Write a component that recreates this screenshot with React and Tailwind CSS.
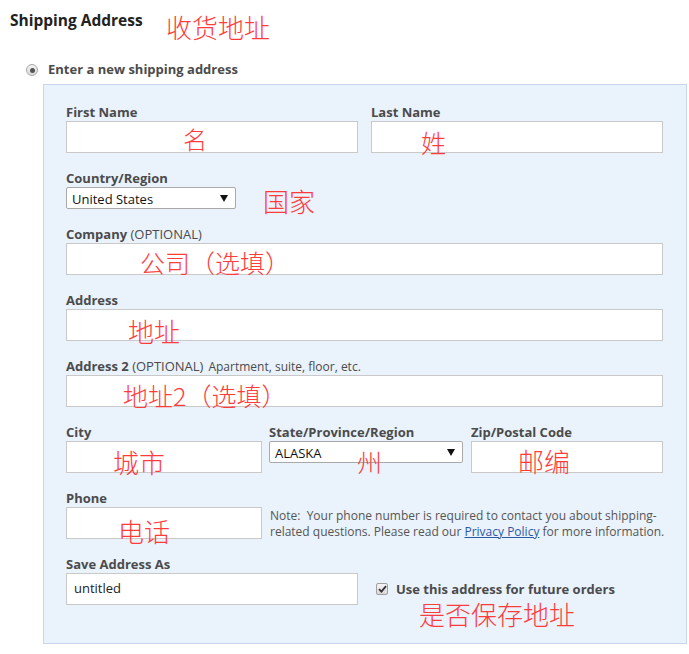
import React from "react";

const font = { fontFamily: '"Open Sans", "Noto Sans", sans-serif' };

function Label({ children }) {
  return (
    <div className="h-[18px] leading-[18px] text-[13px] font-bold text-[#4b4b4b] whitespace-nowrap">
      {children}
    </div>
  );
}

function Input({ className = "", value = "" }) {
  return (
    <div
      className={`h-[32px] bg-white border border-[#c9c9c9] flex items-center px-[7px] text-[13px] text-[#222] ${className}`}
    >
      {value}
    </div>
  );
}

function Select({ className = "", value }) {
  return (
    <div
      className={`h-[22px] bg-white border border-[#a9a9a9] rounded-[2px] flex items-center justify-between pl-[5px] pr-[7px] text-[13px] text-[#111] ${className}`}
    >
      <span className="leading-[20px] pt-[1px]">{value}</span>
      <svg width="8" height="7" viewBox="0 0 8 7">
        <path d="M0 0 H8 L4 7 Z" fill="#111" />
      </svg>
    </div>
  );
}

function Note({ text, className }) {
  return (
    <div
      className={`absolute text-[#ff3b3b] leading-none whitespace-nowrap pointer-events-none ${className}`}
      style={{ fontFamily: '"Noto Sans CJK SC", sans-serif', fontWeight: 300 }}
    >
      {text}
    </div>
  );
}

export default function App() {
  return (
    <div className="relative w-[689px] h-[654px] bg-white overflow-hidden" style={font}>
      <div className="px-[10px] pt-[10px]">
        <div className="h-[20px] leading-[20px] text-[15.5px] font-bold text-[#222]">
          Shipping Address
        </div>
        <div className="mt-[31px] ml-[16px] flex items-center h-[18px]">
          <span className="w-[12px] h-[12px] rounded-full border border-[#a8a8a8] bg-gradient-to-b from-[#f2f2f2] to-[#dcdcdc] flex items-center justify-center">
            <span className="w-[5px] h-[5px] rounded-full bg-[#555]" />
          </span>
          <span className="ml-[10px] text-[13px] font-bold text-[#4b4b4b]">
            Enter a new shipping address
          </span>
        </div>
        <div className="mt-[5px] ml-[33px] w-[644px] border border-[#c7d6e8] bg-[#eaf2fc] pl-[22px] pr-[23px] pt-[18px] pb-[38px]">
          <div className="flex gap-[13px]">
            <div className="w-[292px]">
              <Label>First Name</Label>
              <Input />
            </div>
            <div className="w-[292px]">
              <Label>Last Name</Label>
              <Input />
            </div>
          </div>

          <div className="mt-[16px]">
            <Label>Country/Region</Label>
            <Select className="w-[170px]" value="United States" />
          </div>

          <div className="mt-[16px]">
            <Label>
              Company <span className="font-normal">(OPTIONAL)</span>
            </Label>
            <Input />
          </div>

          <div className="mt-[16px]">
            <Label>Address</Label>
            <Input />
          </div>

          <div className="mt-[16px]">
            <Label>
              Address 2 <span className="font-normal">(OPTIONAL)</span>
              <span className="font-normal text-[12px] ml-[5px]">Apartment, suite, floor, etc.</span>
            </Label>
            <Input />
          </div>

          <div className="mt-[16px] flex">
            <div className="w-[196px]">
              <Label>City</Label>
              <Input />
            </div>
            <div className="w-[194px] ml-[7px]">
              <Label>State/Province/Region</Label>
              <Select value="ALASKA" />
            </div>
            <div className="w-[192px] ml-[8px]">
              <Label>Zip/Postal Code</Label>
              <Input />
            </div>
          </div>

          <div className="mt-[16px] flex">
            <div className="w-[196px] shrink-0">
              <Label>Phone</Label>
              <Input />
            </div>
            <div className="ml-[8px] mt-[19px] text-[12px] leading-[16px] text-[#555] whitespace-nowrap">
              Note:&nbsp; Your phone number is required to contact you about shipping-
              <br />
              related questions. Please read our{" "}
              <span className="text-[#2b5aa8] underline">Privacy Policy</span> for more information.
            </div>
          </div>

          <div className="mt-[15px] flex">
            <div className="w-[292px] shrink-0">
              <Label>Save Address As</Label>
              <Input value="untitled" />
            </div>
            <div className="ml-[18px] mt-[26px] flex items-center h-[16px]">
              <span className="w-[12px] h-[12px] rounded-[2px] border border-[#a0a0a0] bg-gradient-to-b from-[#f4f4f4] to-[#d8d8d8] flex items-center justify-center">
                <svg width="9" height="8" viewBox="0 0 9 8">
                  <path d="M1 4.2 L3.4 6.6 L8 1.2" stroke="#333" strokeWidth="1.8" fill="none" />
                </svg>
              </span>
              <span className="ml-[8px] text-[13px] leading-[16px] font-bold text-[#4b4b4b] whitespace-nowrap">
                Use this address for future orders
              </span>
            </div>
          </div>
        </div>
      </div>

      <Note text="收货地址" className="left-[166px] top-[14px] text-[26px]" />
      <Note text="名" className="left-[183px] top-[127px] text-[24px]" />
      <Note text="姓" className="left-[421px] top-[130px] text-[25px]" />
      <Note text="国家" className="left-[263px] top-[188px] text-[26px]" />
      <Note text="公司（选填）" className="left-[140px] top-[250px] text-[25px]" />
      <Note text="地址" className="left-[128px] top-[318px] text-[26px]" />
      <Note text="地址2（选填）" className="left-[123px] top-[383px] text-[25px]" />
      <Note text="城市" className="left-[113px] top-[449px] text-[26px]" />
      <Note text="州" className="left-[357px] top-[449px] text-[25px]" />
      <Note text="邮编" className="left-[518px] top-[448px] text-[26px]" />
      <Note text="电话" className="left-[118px] top-[518px] text-[26px]" />
      <Note text="是否保存地址" className="left-[419px] top-[601px] text-[26px]" />
    </div>
  );
}
